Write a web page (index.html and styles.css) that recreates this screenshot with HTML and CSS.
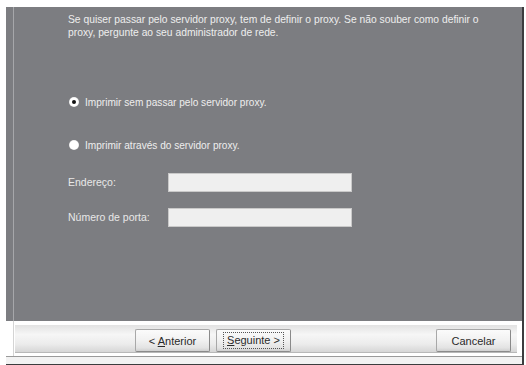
FILE: index.html
```html
<!DOCTYPE html>
<html lang="pt">
<head>
<meta charset="utf-8">
<title>Proxy</title>
<link rel="stylesheet" href="styles.css">
</head>
<body>
<div class="window">
  <div class="panel">
    <p class="intro">Se quiser passar pelo servidor proxy, tem de definir o proxy. Se não souber como definir o<br>proxy, pergunte ao seu administrador de rede.</p>
    <div class="radio-row first"><span class="radio checked"></span><span class="radio-label">Imprimir sem passar pelo servidor proxy.</span></div>
    <div class="radio-row second"><span class="radio"></span><span class="radio-label">Imprimir através do servidor proxy.</span></div>
    <div class="field-row first-field"><span class="field-label">Endereço:</span><span class="field-input"></span></div>
    <div class="field-row second-field"><span class="field-label">Número de porta:</span><span class="field-input"></span></div>
  </div>
  <div class="footer">
    <div class="bar">
      <div class="btn back"><span>&lt; <u>A</u>nterior</span></div>
      <div class="btn next"><span class="focus"><u>S</u>eguinte &gt;</span></div>
      <div class="spacer"></div>
      <div class="btn cancel"><span>Cancelar</span></div>
    </div>
    <div class="bottom-lines"></div>
  </div>
</div>
</body>
</html>
```

FILE: styles.css
```css
html, body {
  margin: 0;
  padding: 0;
  background: #ffffff;
}
body {
  padding: 7px 0 0 6px;
  font-family: "Liberation Sans", Arial, sans-serif;
  font-size: 11px;
}
.window {
  width: 518px;
}
.panel {
  height: 314px;
  box-sizing: border-box;
  border-right: 2px solid #3c3c3e;
  background: linear-gradient(to right, #7c7d81 7px, #a6a7aa 7px, #a6a7aa 8px, #7c7d81 8px);
  padding: 6px 0 0 62px;
  color: #eeeeee;
  display: flex;
  flex-direction: column;
}
.intro {
  margin: 0;
  line-height: 13px;
  font-size: 10.3px;
}
.radio-row {
  display: flex;
  align-items: center;
  height: 14px;
  gap: 6px;
  margin-left: 1px;
}
.radio-row.first { margin-top: 56px; }
.radio-row.second { margin-top: 29px; }
.radio {
  width: 10px;
  height: 10px;
  border-radius: 50%;
  background: radial-gradient(circle, #ffffff 55%, #e4e4e4 75%, #b0b0b2 100%);
  display: flex;
  align-items: center;
  justify-content: center;
}
.radio.checked::after {
  content: "";
  width: 4px;
  height: 4px;
  border-radius: 50%;
  background: #111;
}
.radio-label {
  font-size: 10.1px;
}
.field-row {
  display: flex;
  align-items: center;
  height: 20px;
}
.field-row.first-field { margin-top: 20px; }
.field-row.second-field { margin-top: 15px; }
.field-label {
  width: 100px;
  font-size: 10.5px;
  color: #e8e8e8;
}
.field-input {
  width: 184px;
  height: 19px;
  box-sizing: border-box;
  background: #efefef;
  border: 1px solid #c9c9c9;
}
.footer {
  height: 44px;
  box-sizing: border-box;
  padding-top: 4px;
  border-right: 2px solid #3c3c3e;
  background: linear-gradient(to right, #ffffff 7px, #d4d4d4 7px, #d4d4d4 8px, #ffffff 8px);
}
.bar {
  margin: 0 5px 0 9px;
  height: 28px;
  box-sizing: border-box;
  padding: 4px 0 1px 120px;
  background: linear-gradient(to bottom, #e2e2e2 0%, #f6f6f6 35%, #ececec 70%, #d6d6d6 100%);
  display: flex;
  gap: 6px;
  border-bottom: 1px solid #b8b8b8;
}
.spacer { flex: 1; }
.btn {
  width: 75px;
  height: 23px;
  box-sizing: border-box;
  border: 1px solid #a8a8a8;
  border-right-color: #8a8a8a;
  border-bottom-color: #8a8a8a;
  border-radius: 2px;
  background: linear-gradient(to bottom, #fbfbfb 0%, #f1f1f1 50%, #e3e3e3 85%, #cfcfcf 100%);
  color: #2a2a2a;
  font-size: 11px;
  display: flex;
  align-items: center;
  justify-content: center;
}
.btn.next .focus {
  border: 1px dotted #555;
  padding: 1px 3px;
  line-height: 13px;
}
.btn.cancel { margin-right: 6px; }
.bottom-lines {
  margin: 3px 0 0 0;
  height: 7px;
  border-top: 1px solid #9a9a9a;
  border-bottom: 2px solid #3c3c3e;
  background: #f2f2f2;
}
```
